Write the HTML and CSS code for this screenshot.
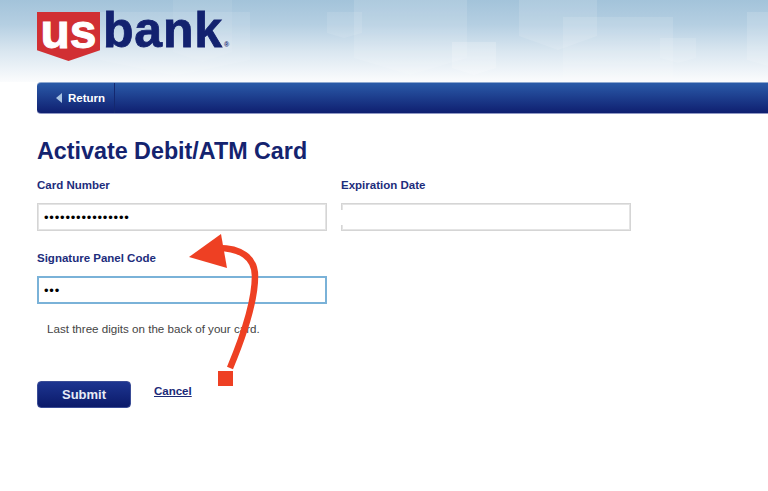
FILE: index.html
```html
<!DOCTYPE html>
<html lang="en">
<head>
    <meta charset="UTF-8">
    <meta name="viewport" content="width=device-width, initial-scale=1.0">
    <title>Activate Debit/ATM Card</title>
    <link rel="stylesheet" href="styles.css">
</head>
<body>
    <div class="header">
        <svg class="header-shapes" width="768" height="82" viewBox="0 0 768 82">
            <g fill="#fff">
                <path opacity=".07" d="M173 0H232V52L202 62L173 52Z"/>
                <path opacity=".1" d="M100 12H250V60L175 76L100 60Z"/>
                <path opacity=".1" d="M327 12H362V33L344 38L327 33Z"/>
                <path opacity=".12" d="M354 0H467V58L410 75L354 58Z"/>
                <path opacity=".2" d="M452 42H496V68L474 75L452 68Z"/>
                <path opacity=".12" d="M519 0H597V36L558 50L519 36Z"/>
                <path opacity=".12" d="M563 17H673V82H563Z"/>
                <path opacity=".12" d="M660 38H696V58L678 63L660 58Z"/>
                <path opacity=".14" d="M747 12H768V66L747 60Z"/>
            </g>
        </svg>
        <div class="logo">
            <div class="logo-shield"><span>us</span></div>
            <span class="logo-bank">bank</span>
            <span class="logo-mark">®</span>
        </div>
    </div>

    <div class="nav-bar">
        <a class="return-btn" href="#"><span class="return-arrow"></span>Return</a>
    </div>

    <div class="content">
        <h1>Activate Debit/ATM Card</h1>
        <div class="form-grid">
            <div class="field">
                <label for="card-number">Card Number</label>
                <input type="password" id="card-number" value="................">
            </div>
            <div class="field">
                <label for="exp-date">Expiration Date</label>
                <div class="exp-wrap"><input type="text" id="exp-date"></div>
            </div>
            <div class="field">
                <label for="panel-code">Signature Panel Code</label>
                <input class="focused" type="password" id="panel-code" value="...">
            </div>
        </div>
        <p class="hint">Last three digits on the back of your card.</p>
        <div class="actions">
            <button class="submit-btn">Submit</button>
            <a class="cancel-link" href="#">Cancel</a>
        </div>
    </div>

    <svg class="annotation" width="768" height="491" viewBox="0 0 768 491">
        <path d="M230 368C245 332 255 300 255 276C255 257 240 248 218 248" fill="none" stroke="#ee4023" stroke-width="6.5"/>
        <path d="M189 257L221 234L227 268Z" fill="#ee4023"/>
        <rect x="218" y="371" width="15" height="15" fill="#ee4023"/>
    </svg>
</body>
</html>
```

FILE: styles.css
```css
body {
    font-family: "Liberation Sans", Arial, sans-serif;
    background-color: #fff;
    margin: 0;
    padding: 0;
    position: relative;
    height: 491px;
    overflow: hidden;
}

.header {
    position: relative;
    height: 82px;
    padding-left: 37px;
    background: linear-gradient(#a3c3da 0%, #b5cfe2 30%, #d9e6f0 62%, #fbfcfd 100%);
}

.header-shapes {
    position: absolute;
    top: 0;
    left: 0;
}

.logo {
    position: relative;
    display: flex;
    align-items: flex-start;
    padding-top: 12px;
    font-weight: bold;
}

.logo-shield {
    width: 63px;
    height: 49px;
    background-color: #d12f33;
    clip-path: polygon(0 0, 100% 0, 100% 78%, 50% 100%, 0 78%);
    text-align: center;
    color: #fff;
    font-size: 48px;
    line-height: 39px;
    letter-spacing: 0;
    -webkit-text-stroke: 1px #fff;
}

.logo-bank {
    margin-left: 3px;
    color: #13226f;
    font-size: 50px;
    line-height: 37px;
    letter-spacing: .8px;
    -webkit-text-stroke: .8px #13226f;
}

.logo-mark {
    margin: 29px 0 0 1px;
    color: #13226f;
    font-size: 7px;
    line-height: 8px;
}

.nav-bar {
    height: 30px;
    margin-left: 37px;
    border-top: 1px solid #8ea8d0;
    border-bottom: 1px solid #8f98c4;
    border-radius: 4px 0 0 4px;
    background: linear-gradient(#2a5aa8, #0f1f70);
}

.return-btn {
    display: flex;
    align-items: center;
    width: 78px;
    height: 30px;
    box-sizing: border-box;
    padding-left: 19px;
    border-right: 1px solid #14286f;
    color: #fff;
    font-size: 11.5px;
    font-weight: bold;
    text-decoration: none;
}

.return-arrow {
    width: 0;
    height: 0;
    margin-right: 6px;
    border-top: 5px solid transparent;
    border-bottom: 5px solid transparent;
    border-right: 6px solid #a9c4e2;
}

.content {
    padding-left: 37px;
}

h1 {
    margin: 24px 0 0;
    color: #14236f;
    font-size: 23.3px;
    line-height: 26px;
}

.form-grid {
    display: grid;
    grid-template-columns: 290px 290px;
    column-gap: 14px;
    row-gap: 19px;
    margin-top: 13px;
}

.field label {
    display: block;
    margin-bottom: 9px;
    color: #1d2d7c;
    font-size: 11.5px;
    font-weight: bold;
    line-height: 17px;
}

.field input {
    display: block;
    width: 100%;
    height: 28px;
    box-sizing: border-box;
    padding: 0 6px;
    border: 1px solid #d5d5d5;
    box-shadow: inset 0 0 0 1px #e4e4e4;
    outline: none;
    background-color: #fff;
    color: #000;
    font-family: "Liberation Sans", Arial, sans-serif;
    font-size: 13px;
    letter-spacing: .8px;
}

.field input.focused {
    border: 2px solid #7ab2d8;
    box-shadow: none;
    padding: 0 5px;
}

.exp-wrap {
    position: relative;
}

.exp-wrap::after {
    content: "";
    position: absolute;
    top: 7px;
    left: 0;
    width: 2px;
    height: 15px;
    background-color: #fff;
}

.hint {
    margin: 17px 0 0 10px;
    color: #444;
    font-size: 11.6px;
    line-height: 16px;
}

.actions {
    display: flex;
    align-items: center;
    margin-top: 44px;
}

.submit-btn {
    width: 94px;
    height: 27px;
    padding: 0;
    border: 1px solid #3a4c96;
    border-radius: 4px;
    background: linear-gradient(#1d3590, #0b1a6a);
    color: #e8ecf6;
    font-family: "Liberation Sans", Arial, sans-serif;
    font-size: 13px;
    font-weight: bold;
}

.cancel-link {
    margin: 0 0 8px 23px;
    color: #1b2a78;
    font-size: 11.5px;
    font-weight: bold;
}

.annotation {
    position: absolute;
    top: 0;
    left: 0;
    pointer-events: none;
}
```
